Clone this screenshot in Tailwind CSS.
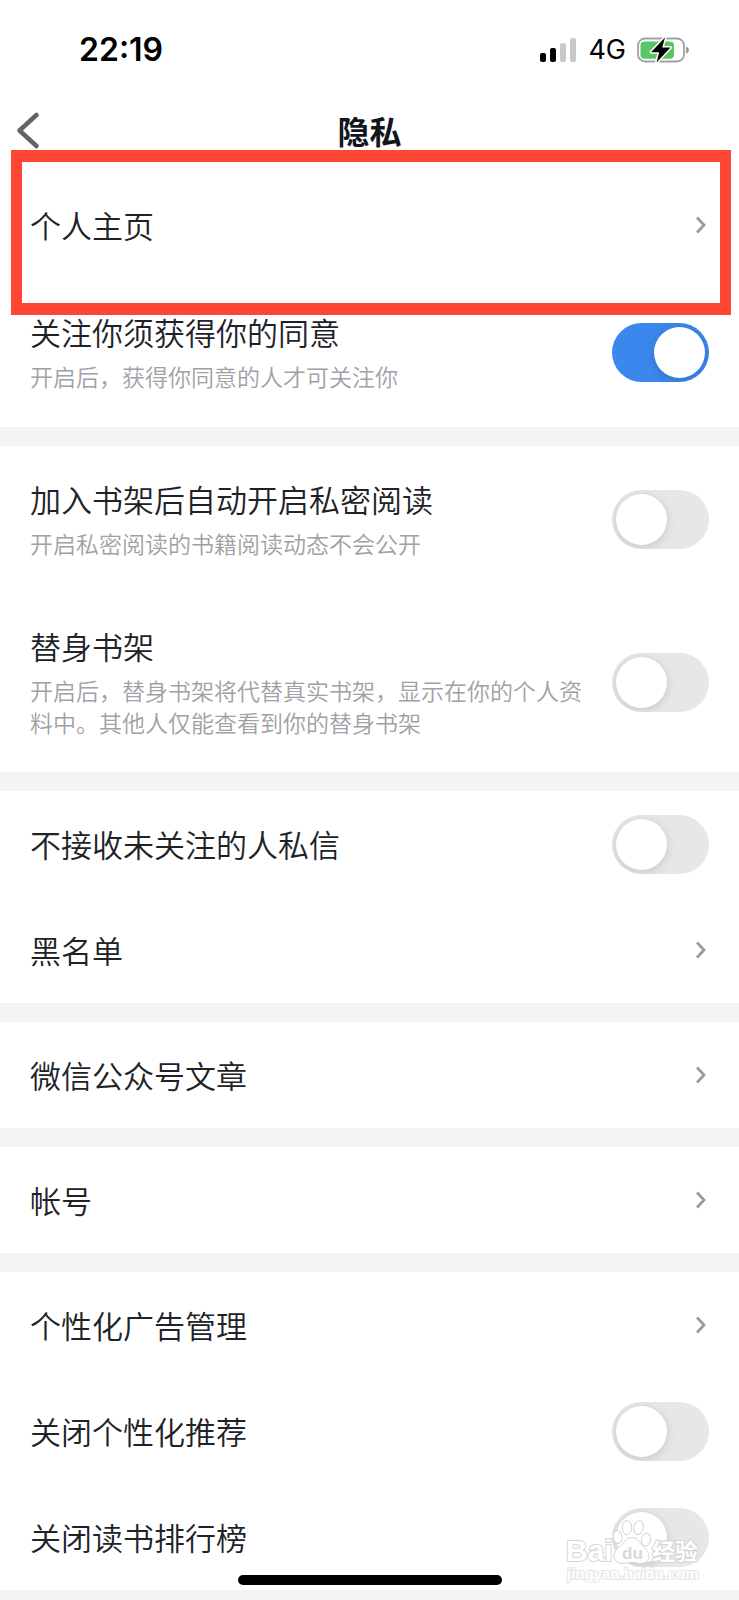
<!DOCTYPE html>
<html lang="zh-CN">
<head>
    <meta charset="UTF-8">
    <meta name="viewport" content="width=device-width, initial-scale=1.0">
    <title>隐私</title>
    <script src="https://cdn.jsdelivr.net/npm/@tailwindcss/browser@4"></script>
</head>
<body class="relative bg-[#f3f4f6] text-[#202227] font-[350] font-['Noto_Sans_CJK_SC',sans-serif]">
    <header class="bg-white">
        <!-- Status bar -->
        <div class="flex items-center justify-between h-[100px] pl-[79px] pr-[50px] text-black font-['Inter',sans-serif]">
            <span class="text-[32px] leading-10 font-semibold">22:19</span>
            <div class="flex items-center">
                <svg class="w-[37px] h-6" viewBox="0 0 37 24" aria-hidden="true">
                    <rect x="0" y="15" width="6" height="9" rx="2" fill="#000"/>
                    <rect x="10" y="10" width="6" height="14" rx="2" fill="#000"/>
                    <rect x="20" y="5" width="6" height="19" rx="2" fill="#c9c9c9"/>
                    <rect x="30" y="0" width="6" height="24" rx="2" fill="#c9c9c9"/>
                </svg>
                <span class="ml-[11px] text-[27px] leading-8 font-normal">4G</span>
                <svg class="ml-[11px] w-[52px] h-[28px]" viewBox="0 0 52 28" aria-hidden="true">
                    <rect x="1" y="2.500" width="46" height="23" rx="7" fill="#fff" stroke="#a5a1a3" stroke-width="1.800"/>
                    <path d="M7.500 5.500H33a4 4 0 0 1 4 4V18.700a4 4 0 0 1-4 4H7.500a4 4 0 0 1-4-4V9.500a4 4 0 0 1 4-4z" fill="#5ac565"/>
                    <path d="M49 10.500c2 .8 3 2 3 3.600s-1 2.800-3 3.600z" fill="#9a9a9a"/>
                    <path d="M28 1.500L14 16.200h8.200L19.500 26.500 33.500 11.500h-8.300z" fill="#000" stroke="#fff" stroke-width="3" paint-order="stroke" stroke-linejoin="round"/>
                </svg>
            </div>
        </div>
        <!-- Navigation bar -->
        <div class="grid grid-cols-3 items-start h-[73px] px-4 pt-[10px]">
            <button type="button" aria-label="返回" class="w-6 h-10">
                <svg class="w-6 h-10" viewBox="0 0 24 40" fill="none" stroke="#606468" stroke-width="4.500" stroke-linecap="round" stroke-linejoin="round">
                    <path d="M20.500 5L3.500 20.500l17 15.500"/>
                </svg>
            </button>
            <h1 class="text-center text-[32px] leading-10 font-bold text-[#14151c]">隐私</h1>
        </div>
    </header>

    <main class="space-y-[19px]">
        <section class="bg-white">
            <a href="#profile" class="flex items-center justify-between pt-8 pb-[34px] pl-[30px] pr-[33px]">
                <span class="text-[31px] leading-10">个人主页</span>
                <svg class="w-[10px] h-[18px]" viewBox="0 0 10 18" fill="none" stroke="#9b9b9f" stroke-width="2.800"><path d="M1 1.500L8 9l-7 7.500"/></svg>
            </a>
            <label class="flex items-center justify-between pt-[33px] pb-[35px] px-[30px]">
                <span class="w-[560px]">
                    <span class="block text-[31px] leading-10">关注你须获得你的同意</span>
                    <span class="block mt-2 text-[23px] leading-8 text-[#a0a1a6]">开启后，获得你同意的人才可关注你</span>
                </span>
                <input type="checkbox" checked class="appearance-none flex shrink-0 items-center w-[97px] h-[59px] p-1 rounded-full bg-[#e7e7ea] overflow-hidden before:size-[51px] before:rounded-full before:bg-white before:shadow-[0_2px_10px_rgba(0,0,0,0.15)] checked:bg-[#3a87ed] checked:before:ml-auto">
            </label>
        </section>

        <section class="bg-white">
            <label class="flex items-center justify-between pt-[33px] pb-[35px] px-[30px]">
                <span class="w-[560px]">
                    <span class="block text-[31px] leading-10">加入书架后自动开启私密阅读</span>
                    <span class="block mt-2 text-[23px] leading-8 text-[#a0a1a6]">开启私密阅读的书籍阅读动态不会公开</span>
                </span>
                <input type="checkbox" class="appearance-none flex shrink-0 items-center w-[97px] h-[59px] p-1 rounded-full bg-[#e7e7ea] overflow-hidden before:size-[51px] before:rounded-full before:bg-white before:shadow-[0_2px_10px_rgba(0,0,0,0.15)] checked:bg-[#3a87ed] checked:before:ml-auto">
            </label>
            <label class="flex items-center justify-between pt-8 pb-[34px] px-[30px]">
                <span class="w-[560px]">
                    <span class="block text-[31px] leading-10">替身书架</span>
                    <span class="block mt-2 text-[23px] leading-8 text-[#a0a1a6]">开启后，替身书架将代替真实书架，显示在你的个人资料中。其他人仅能查看到你的替身书架</span>
                </span>
                <input type="checkbox" class="appearance-none flex shrink-0 items-center w-[97px] h-[59px] p-1 rounded-full bg-[#e7e7ea] overflow-hidden before:size-[51px] before:rounded-full before:bg-white before:shadow-[0_2px_10px_rgba(0,0,0,0.15)] checked:bg-[#3a87ed] checked:before:ml-auto">
            </label>
        </section>

        <section class="bg-white">
            <label class="flex items-center justify-between h-[106px] px-[30px]">
                <span class="text-[31px] leading-10">不接收未关注的人私信</span>
                <input type="checkbox" class="appearance-none flex shrink-0 items-center w-[97px] h-[59px] p-1 rounded-full bg-[#e7e7ea] overflow-hidden before:size-[51px] before:rounded-full before:bg-white before:shadow-[0_2px_10px_rgba(0,0,0,0.15)] checked:bg-[#3a87ed] checked:before:ml-auto">
            </label>
            <a href="#blocklist" class="flex items-center justify-between py-[33px] pl-[30px] pr-[33px]">
                <span class="text-[31px] leading-10">黑名单</span>
                <svg class="w-[10px] h-[18px]" viewBox="0 0 10 18" fill="none" stroke="#9b9b9f" stroke-width="2.800"><path d="M1 1.500L8 9l-7 7.500"/></svg>
            </a>
        </section>

        <section class="bg-white">
            <a href="#articles" class="flex items-center justify-between py-[33px] pl-[30px] pr-[33px]">
                <span class="text-[31px] leading-10">微信公众号文章</span>
                <svg class="w-[10px] h-[18px]" viewBox="0 0 10 18" fill="none" stroke="#9b9b9f" stroke-width="2.800"><path d="M1 1.500L8 9l-7 7.500"/></svg>
            </a>
        </section>

        <section class="bg-white">
            <a href="#account" class="flex items-center justify-between py-[33px] pl-[30px] pr-[33px]">
                <span class="text-[31px] leading-10">帐号</span>
                <svg class="w-[10px] h-[18px]" viewBox="0 0 10 18" fill="none" stroke="#9b9b9f" stroke-width="2.800"><path d="M1 1.500L8 9l-7 7.500"/></svg>
            </a>
        </section>

        <section class="bg-white">
            <a href="#ads" class="flex items-center justify-between py-[33px] pl-[30px] pr-[33px]">
                <span class="text-[31px] leading-10">个性化广告管理</span>
                <svg class="w-[10px] h-[18px]" viewBox="0 0 10 18" fill="none" stroke="#9b9b9f" stroke-width="2.800"><path d="M1 1.500L8 9l-7 7.500"/></svg>
            </a>
            <label class="flex items-center justify-between h-[106px] px-[30px]">
                <span class="text-[31px] leading-10">关闭个性化推荐</span>
                <input type="checkbox" class="appearance-none flex shrink-0 items-center w-[97px] h-[59px] p-1 rounded-full bg-[#e7e7ea] overflow-hidden before:size-[51px] before:rounded-full before:bg-white before:shadow-[0_2px_10px_rgba(0,0,0,0.15)] checked:bg-[#3a87ed] checked:before:ml-auto">
            </label>
            <label class="flex items-center justify-between h-[106px] px-[30px]">
                <span class="text-[31px] leading-10">关闭读书排行榜</span>
                <input type="checkbox" class="appearance-none flex shrink-0 items-center w-[97px] h-[59px] p-1 rounded-full bg-[#e7e7ea] overflow-hidden before:size-[51px] before:rounded-full before:bg-white before:shadow-[0_2px_10px_rgba(0,0,0,0.15)] checked:bg-[#3a87ed] checked:before:ml-auto">
            </label>
        </section>
    </main>
    <div class="h-[10px]"></div>

    <!-- Highlight around the first entry -->
    <div class="absolute top-[150px] left-[11px] right-2 h-[165px] border-x-[11px] border-y-[12px] border-[#ff4635] pointer-events-none"></div>

    <!-- Home indicator -->
    <div class="absolute bottom-[15px] left-1/2 -translate-x-1/2 w-[264px] h-[10px] rounded-full bg-black"></div>

    <!-- Watermark -->
    <svg class="absolute bottom-4 right-9 w-[140px] h-[66px] pointer-events-none font-['Liberation_Sans','Noto_Sans_CJK_SC',sans-serif] font-bold" viewBox="0 0 140 66">
        <g fill="#fff" stroke="#d4d4d6" stroke-width="1">
            <ellipse cx="54.500" cy="19" rx="4.500" ry="6.500" transform="rotate(-10 54.500 19)"/>
            <ellipse cx="64" cy="9.700" rx="4.700" ry="7"/>
            <ellipse cx="75.500" cy="9.700" rx="4.700" ry="7" transform="rotate(12 75.500 9.700)"/>
            <ellipse cx="83" cy="21.500" rx="4.700" ry="6.500" transform="rotate(8 83 21.500)"/>
            <path d="M69 19.500c5 0 7 4 10 8 4 4 7 6 7 11 0 5-4 7-8 7-3 0-5-1-9-1s-6 1-10 1c-4 0-8-3-8-8s4-7 8-11c3-3 5-7 10-7z"/>
        </g>
        <g fill="#fff" stroke="#d4d4d6" stroke-width="2" paint-order="stroke" stroke-linejoin="round">
            <text x="3" y="43" font-size="30">Bai</text>
            <text x="89" y="42" font-size="23">经验</text>
            <text x="4" y="61" font-size="15" stroke="#e6e6e8">jingyan.baidu.com</text>
        </g>
        <text x="59" y="41" font-size="17" fill="#d8d8da">du</text>
    </svg>
</body>
</html>
